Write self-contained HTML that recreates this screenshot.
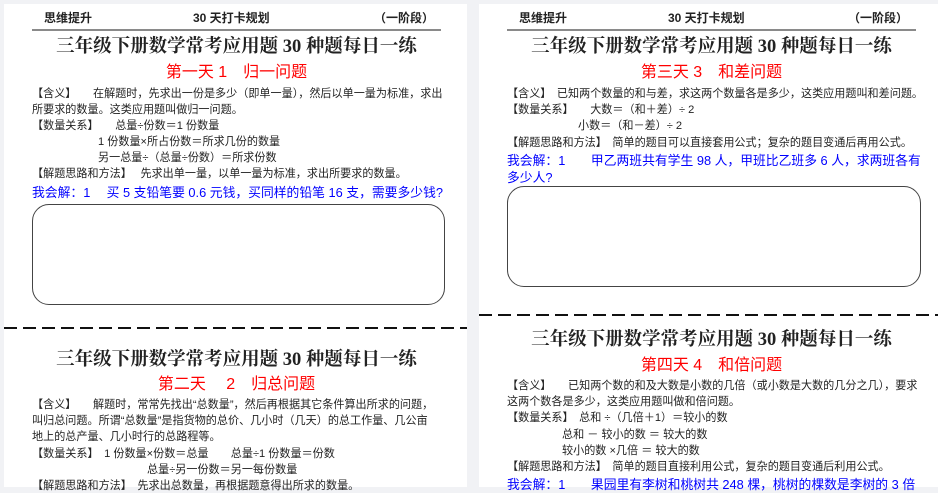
<!DOCTYPE html>
<html><head><meta charset="utf-8"><style>
*{margin:0;padding:0;box-sizing:border-box}
body{width:938px;height:487px;background:#f1f2f5;position:relative;overflow:hidden;font-family:"Liberation Sans","Noto Sans CJK SC",sans-serif;color:#222}
.pg{position:absolute;background:#fff;top:4px;height:483px}
.t{position:absolute;white-space:nowrap;font-size:11.1px;line-height:14px}
.h{font-weight:bold;font-size:12px}
.rule{position:absolute;height:2px;background:#8a8a8a}
.ti{position:absolute;white-space:nowrap;font-family:"Liberation Serif","Noto Serif CJK SC",serif;font-weight:bold;font-size:18.5px;line-height:24px;color:#222;text-align:center}
.red{position:absolute;white-space:nowrap;color:#f00;font-size:16px;line-height:18px;text-align:center}
.blue{position:absolute;white-space:nowrap;color:#00f;font-size:12.8px;line-height:17px}
.box{position:absolute;border:1.3px solid #444;border-radius:17px}
.dash{position:absolute;height:2px;background:repeating-linear-gradient(90deg,#111 0 13px,transparent 13px 19px)}
</style></head><body>
<div class="pg" style="left:4px;width:463px"></div>
<div class="pg" style="left:479px;width:459px"></div>

<!-- left top -->
<div class="t h" style="left:44px;top:11px">思维提升</div>
<div class="t h" style="left:193px;top:11px">30 天打卡规划</div>
<div class="t h" style="left:374px;top:11px">（一阶段）</div>
<div class="rule" style="left:32px;top:29px;width:409px"></div>
<div class="ti" style="left:32px;width:409px;top:35px">三年级下册数学常考应用题 30 种题每日一练</div>
<div class="red" style="left:32px;width:409px;top:64px">第一天 1　归一问题</div>
<div class="t" style="left:32px;top:87px">【含义】　　在解题时，先求出一份是多少（即单一量），然后以单一量为标准，求出</div>
<div class="t" style="left:32px;top:103px">所要求的数量。这类应用题叫做归一问题。</div>
<div class="t" style="left:32px;top:119px">【数量关系】　　总量÷份数＝1 份数量</div>
<div class="t" style="left:98px;top:135px">1 份数量×所占份数＝所求几份的数量</div>
<div class="t" style="left:98px;top:151px">另一总量÷（总量÷份数）＝所求份数</div>
<div class="t" style="left:32px;top:167px">【解题思路和方法】　 先求出单一量，以单一量为标准，求出所要求的数量。</div>
<div class="blue" style="left:32px;top:184px">我会解：1　 买 5 支铅笔要 0.6 元钱，买同样的铅笔 16 支，需要多少钱?</div>
<div class="box" style="left:32px;top:204px;width:413px;height:101px"></div>
<div class="dash" style="left:4px;top:327px;width:463px"></div>

<!-- left bottom -->
<div class="ti" style="left:32px;width:409px;top:348px">三年级下册数学常考应用题 30 种题每日一练</div>
<div class="red" style="left:32px;width:409px;top:376px">第二天　 2　归总问题</div>
<div class="t" style="left:32px;top:398px">【含义】　　解题时，常常先找出“总数量”，然后再根据其它条件算出所求的问题，</div>
<div class="t" style="left:32px;top:414px">叫归总问题。所谓“总数量”是指货物的总价、几小时（几天）的总工作量、几公亩</div>
<div class="t" style="left:32px;top:430px">地上的总产量、几小时行的总路程等。</div>
<div class="t" style="left:32px;top:447px">【数量关系】　1 份数量×份数＝总量　　总量÷1 份数量＝份数</div>
<div class="t" style="left:147px;top:463px">总量÷另一份数＝另一每份数量</div>
<div class="t" style="left:32px;top:479px">【解题思路和方法】　先求出总数量，再根据题意得出所求的数量。</div>

<!-- right top -->
<div class="t h" style="left:519px;top:11px">思维提升</div>
<div class="t h" style="left:668px;top:11px">30 天打卡规划</div>
<div class="t h" style="left:848px;top:11px">（一阶段）</div>
<div class="rule" style="left:507px;top:29px;width:409px"></div>
<div class="ti" style="left:507px;width:409px;top:35px">三年级下册数学常考应用题 30 种题每日一练</div>
<div class="red" style="left:507px;width:409px;top:64px">第三天 3　和差问题</div>
<div class="t" style="left:507px;top:87px">【含义】　已知两个数量的和与差，求这两个数量各是多少，这类应用题叫和差问题。</div>
<div class="t" style="left:507px;top:103px">【数量关系】　　大数＝（和＋差）÷ 2</div>
<div class="t" style="left:578px;top:119px">小数＝（和－差）÷ 2</div>
<div class="t" style="left:507px;top:136px">【解题思路和方法】　简单的题目可以直接套用公式；复杂的题目变通后再用公式。</div>
<div class="blue" style="left:507px;top:152px">我会解：1　　甲乙两班共有学生 98 人，甲班比乙班多 6 人，求两班各有</div>
<div class="blue" style="left:507px;top:169px">多少人?</div>
<div class="box" style="left:507px;top:186px;width:414px;height:101px"></div>
<div class="dash" style="left:479px;top:314px;width:459px"></div>

<!-- right bottom -->
<div class="ti" style="left:507px;width:409px;top:328px">三年级下册数学常考应用题 30 种题每日一练</div>
<div class="red" style="left:507px;width:409px;top:357px">第四天 4　和倍问题</div>
<div class="t" style="left:507px;top:379px">【含义】　　已知两个数的和及大数是小数的几倍（或小数是大数的几分之几），要求</div>
<div class="t" style="left:507px;top:395px">这两个数各是多少，这类应用题叫做和倍问题。</div>
<div class="t" style="left:507px;top:411px">【数量关系】　总和 ÷（几倍＋1）＝较小的数</div>
<div class="t" style="left:562px;top:428px">总和 － 较小的数 ＝ 较大的数</div>
<div class="t" style="left:562px;top:444px">较小的数 ×几倍 ＝ 较大的数</div>
<div class="t" style="left:507px;top:460px">【解题思路和方法】　简单的题目直接利用公式，复杂的题目变通后利用公式。</div>
<div class="blue" style="left:507px;top:476px">我会解：1　　果园里有李树和桃树共 248 棵，桃树的棵数是李树的 3 倍</div>
</body></html>
